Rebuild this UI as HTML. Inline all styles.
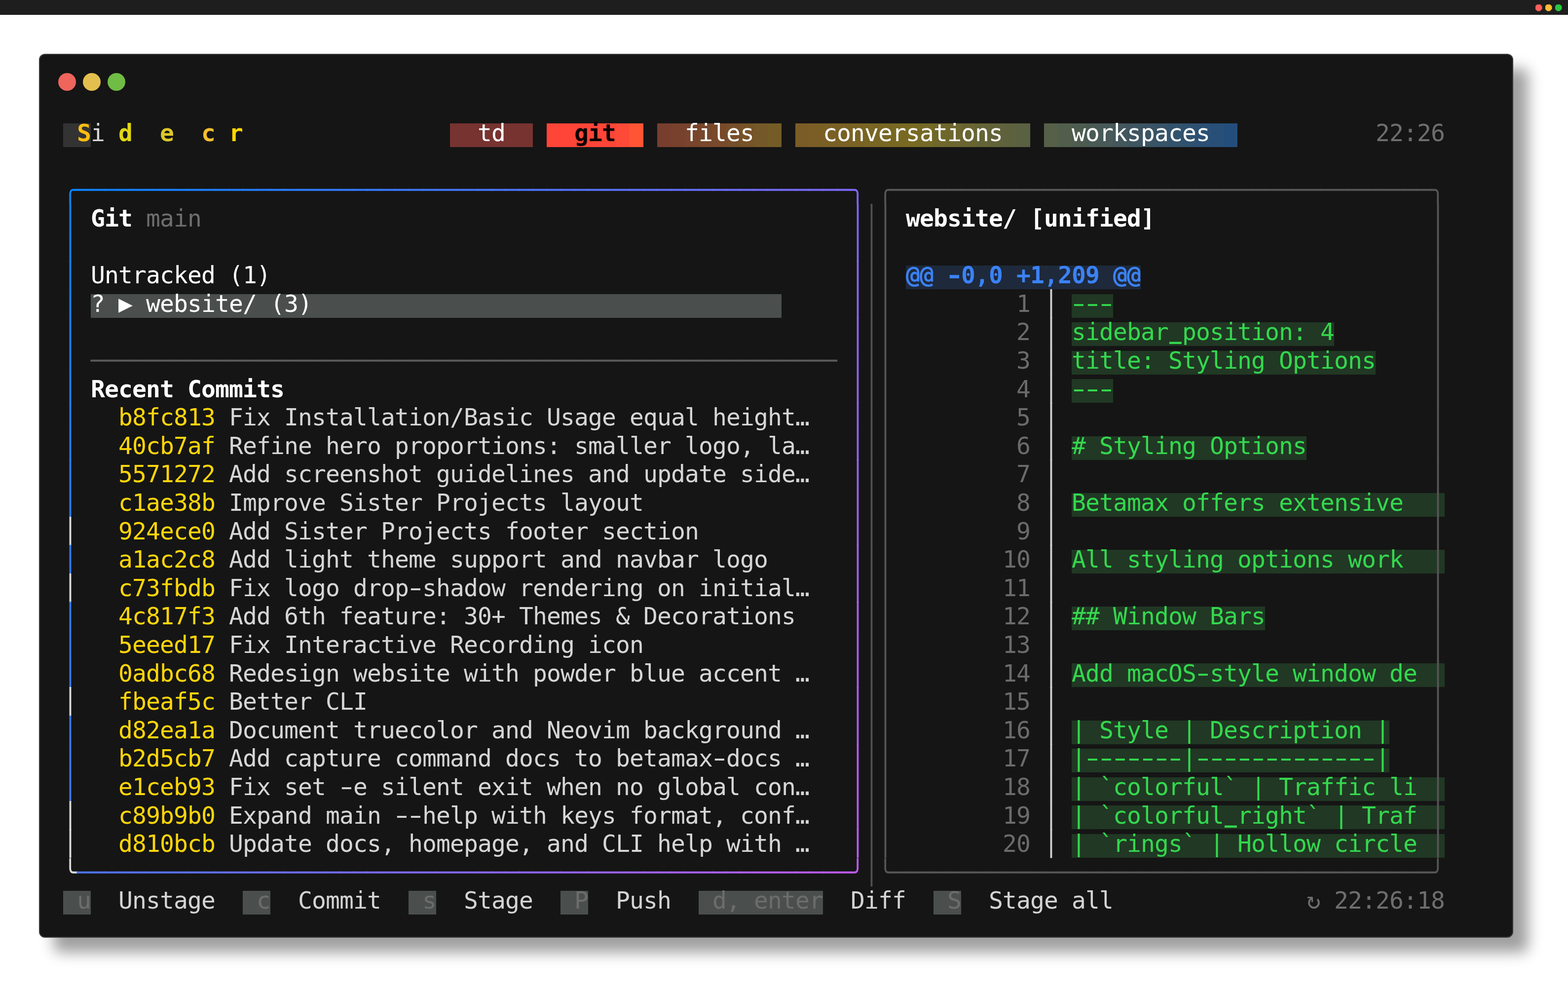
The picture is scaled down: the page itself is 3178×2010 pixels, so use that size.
<!DOCTYPE html>
<html lang="en"><head><meta charset="utf-8"><title>Sidecar - git</title>
<style>
html,body{margin:0;padding:0;background:#fff}
body{width:3178px;height:2010px;position:relative;overflow:hidden;font-family:"DejaVu Sans Mono","Liberation Mono",monospace}
#bar{position:absolute;left:0;top:0;width:3178px;height:29px;background:#1e1e1e;border-bottom:1px solid #0c0c0c}
#bar b{position:absolute;top:8.5px;width:14px;height:14px;clip-path:polygon(31% 0,69% 0,100% 31%,100% 69%,69% 100%,31% 100%,0 69%,0 31%)}
#win{position:absolute;left:79px;top:109px;width:2988px;height:1791px;background:#151515;border:2px solid #3a3a3a;border-radius:12px;box-shadow:30px 30px 29px rgba(0,0,0,.375);box-sizing:border-box}
#win .dot{position:absolute;top:37px;width:36px;height:36px;border-radius:50%}
#t{position:absolute;left:47px;top:-2px;width:2800px;height:1px;font-size:48px;line-height:57.6px;letter-spacing:calc(28px - 1ch);white-space:pre;color:#d6d6d6;will-change:transform}
.r{position:absolute;left:0;width:2800px;height:57.6px}
.r span{position:relative}
.r .h,.r .u,.r .v{display:inline-block}
.r i{position:absolute;top:8.8px;height:48px;display:block}
.b{font-weight:bold}
.r .h{transform:translateY(-1px) scaleX(1.565);transform-origin:14.45px 50%}
.r .u{transform:translateY(-4.3px) scale(.86,2.35);transform-origin:14.45px 56.2px}
.r .h.b{transform:scaleX(1.305)}
.r .v{transform:scaleY(1.026);transform-origin:50% 51%}
</style></head>
<body>
<div id="bar"><b style="left:3111.5px;background:#ff5f58"></b><b style="left:3131.5px;background:#febc2e"></b><b style="left:3151.5px;background:#28c840"></b></div>
<div id="win">
<div class="dot" style="left:37px;background:#ee655c"></div><div class="dot" style="left:87px;background:#e3c04e"></div><div class="dot" style="left:137px;background:#6fbd45"></div>
<div id="t">
<div class="r" style="top:132.2px"><i style="left:0px;width:56px;background:#333333"></i><i style="left:784px;width:168px;background:linear-gradient(90deg,#773330 0px,#773330 28px,#773330 28px,#773330 56px,#773330 56px,#773330 84px,#773330 84px,#773330 112px,#773330 112px,#773330 140px,#773330 140px,#773330 168px)"></i><i style="left:980px;width:196px;background:linear-gradient(90deg,#ff4538 0px,#ff4538 28px,#ff4538 28px,#ff4538 56px,#ff4538 56px,#ff4538 84px,#ff4538 84px,#ff4538 112px,#ff4538 112px,#ff4538 140px,#ff4a38 140px,#ff4a38 168px,#ff5535 168px,#ff5535 196px)"></i><i style="left:1204px;width:252px;background:linear-gradient(90deg,#773e2e 0px,#773e2e 28px,#77412d 28px,#77412d 56px,#78442c 56px,#78442c 84px,#78472c 84px,#78472c 112px,#784a2b 112px,#784a2b 140px,#774e2a 140px,#774e2a 168px,#765328 168px,#765328 196px,#745827 196px,#745827 224px,#735c26 224px,#735c26 252px)"></i><i style="left:1484px;width:476px;background:linear-gradient(90deg,#7a5c26 0px,#7a5c26 28px,#7a5e26 28px,#7a5e26 56px,#7a6025 56px,#7a6025 84px,#796124 84px,#796124 112px,#796324 112px,#796324 140px,#796524 140px,#796524 168px,#786623 168px,#786623 196px,#786822 196px,#786822 224px,#786a22 224px,#786a22 252px,#746926 252px,#746926 280px,#70682a 280px,#70682a 308px,#6d662e 308px,#6d662e 336px,#696532 336px,#696532 364px,#656436 364px,#656436 392px,#62623a 392px,#62623a 420px,#5e613e 420px,#5e613e 448px,#5a6042 448px,#5a6042 476px)"></i><i style="left:1988px;width:392px;background:linear-gradient(90deg,#566048 0px,#566048 28px,#525e4c 28px,#525e4c 56px,#4e5c50 56px,#4e5c50 84px,#4a5a54 84px,#4a5a54 112px,#475958 112px,#475958 140px,#43575c 140px,#43575c 168px,#3f5560 168px,#3f5560 196px,#3b5464 196px,#3b5464 224px,#375368 224px,#375368 252px,#33526c 252px,#33526c 280px,#2f5170 280px,#2f5170 308px,#2b5074 308px,#2b5074 336px,#274f78 336px,#274f78 364px,#234e7c 364px,#234e7c 392px)"></i> <span class="b" style="color:#ffbe0f">S</span><span style="color:#d7d7d7">i</span> <span class="b" style="color:#e1d714">d</span>  <span class="b" style="color:#dcc828">e</span>  <span class="b" style="color:#f5be2d">c</span> <span class="b" style="color:#ffd700">r</span>                 <span style="color:#ffffff">td</span>     <span class="b" style="color:#0a0000">git</span>     <span style="color:#ffffff">files</span>     <span style="color:#ffffff">conversations</span>     <span style="color:#ffffff">workspaces</span>            <span style="color:#6e6e6e">22:26</span></div>
<div class="r" style="top:247.4px"><span style="color:#0a84ff">╭</span><span style="color:#0c84ff">─</span><span style="color:#0e83ff">─</span><span style="color:#1083ff">─</span><span style="color:#1282fe">─</span><span style="color:#1482fe">─</span><span style="color:#1681fe">─</span><span style="color:#1881fe">─</span><span style="color:#1a80fe">─</span><span style="color:#1c80fe">─</span><span style="color:#1e7ffe">─</span><span style="color:#207ffd">─</span><span style="color:#227efd">─</span><span style="color:#247efd">─</span><span style="color:#267dfd">─</span><span style="color:#287dfd">─</span><span style="color:#2b7cfd">─</span><span style="color:#2d7cfd">─</span><span style="color:#2f7cfc">─</span><span style="color:#317bfc">─</span><span style="color:#337bfc">─</span><span style="color:#357afc">─</span><span style="color:#377afc">─</span><span style="color:#3979fc">─</span><span style="color:#3b79fb">─</span><span style="color:#3d78fb">─</span><span style="color:#3f78fb">─</span><span style="color:#4177fb">─</span><span style="color:#4377fb">─</span><span style="color:#4576fb">─</span><span style="color:#4776fb">─</span><span style="color:#4975fa">─</span><span style="color:#4b75fa">─</span><span style="color:#4d74fa">─</span><span style="color:#4f74fa">─</span><span style="color:#5173fa">─</span><span style="color:#5373fa">─</span><span style="color:#5573fa">─</span><span style="color:#5772f9">─</span><span style="color:#5972f9">─</span><span style="color:#5b71f9">─</span><span style="color:#5d71f9">─</span><span style="color:#5f70f9">─</span><span style="color:#6170f9">─</span><span style="color:#636ff9">─</span><span style="color:#656ff8">─</span><span style="color:#676ef8">─</span><span style="color:#6a6ef8">─</span><span style="color:#6c6df8">─</span><span style="color:#6e6df8">─</span><span style="color:#706cf8">─</span><span style="color:#726cf8">─</span><span style="color:#746bf7">─</span><span style="color:#766bf7">─</span><span style="color:#786bf7">─</span><span style="color:#7a6af7">─</span><span style="color:#7c6af7">─</span><span style="color:#7e69f7">╮</span> <span style="color:#565656">╭───────────────────────────────────────╮</span></div>
<div class="r" style="top:305.0px"><span class="v" style="color:#0d83ff">│</span> <span class="b" style="color:#ffffff">Git</span> <span style="color:#6e6e6e">main</span>                                               <span class="v" style="color:#8168f6">│</span><span class="v" style="color:#505050">│</span><span class="v" style="color:#565656">│</span> <span class="b" style="color:#ffffff">website/ [unified]</span>                    <span class="v" style="color:#565656">│</span></div>
<div class="r" style="top:362.6px"><span class="v" style="color:#0f83ff">│</span>                                                        <span class="v" style="color:#8368f6">│</span><span class="v" style="color:#505050">│</span><span class="v" style="color:#565656">│</span>                                       <span class="v" style="color:#565656">│</span></div>
<div class="r" style="top:420.2px"><i style="left:1708px;width:476px;background:#1e293b"></i><span class="v" style="color:#1282fe">│</span> <span style="color:#ffffff">Untracked (1)</span>                                          <span class="v" style="color:#8667f6">│</span><span class="v" style="color:#505050">│</span><span class="v" style="color:#565656">│</span> <span class="b" style="color:#3b82f6">@@</span> <span class="h b" style="color:#3b82f6">-</span><span class="b" style="color:#3b82f6">0,0 +1,209 @@</span>                     <span class="v" style="color:#565656">│</span></div>
<div class="r" style="top:477.8px"><i style="left:56px;width:1400px;background:#4a4f4e"></i><i style="left:2044px;width:84px;background:#213824"></i><span class="v" style="color:#1581fe">│</span> <span style="color:#ffffff">? ▶ website/ (3)</span>                                       <span class="v" style="color:#8967f6">│</span><span class="v" style="color:#505050">│</span><span class="v" style="color:#565656">│</span>         <span style="color:#6b6b6b">1</span> <span class="v" style="color:#d0d0d0">│</span> <span class="h" style="color:#34d84e">-</span><span class="h" style="color:#34d84e">-</span><span class="h" style="color:#34d84e">-</span>                       <span class="v" style="color:#565656">│</span></div>
<div class="r" style="top:535.4px"><i style="left:2044px;width:532px;background:#213824"></i><span class="v" style="color:#1881fe">│</span>                                                        <span class="v" style="color:#8b66f6">│</span><span class="v" style="color:#505050">│</span><span class="v" style="color:#565656">│</span>         <span style="color:#6b6b6b">2</span> <span class="v" style="color:#d0d0d0">│</span> <span style="color:#34d84e">sidebar</span><span class="u" style="color:#34d84e">_</span><span style="color:#34d84e">position: 4</span>       <span class="v" style="color:#565656">│</span></div>
<div class="r" style="top:593.0px"><i style="left:2044px;width:616px;background:#213824"></i><span class="v" style="color:#1a80fe">│</span> <span style="color:#5a5a5a">──────────────────────────────────────────────────────</span> <span class="v" style="color:#8e65f6">│</span><span class="v" style="color:#505050">│</span><span class="v" style="color:#565656">│</span>         <span style="color:#6b6b6b">3</span> <span class="v" style="color:#d0d0d0">│</span> <span style="color:#34d84e">title: Styling Options</span>    <span class="v" style="color:#565656">│</span></div>
<div class="r" style="top:650.6px"><i style="left:2044px;width:84px;background:#213824"></i><span class="v" style="color:#1d80fe">│</span> <span class="b" style="color:#ffffff">Recent Commits</span>                                         <span class="v" style="color:#9165f5">│</span><span class="v" style="color:#505050">│</span><span class="v" style="color:#565656">│</span>         <span style="color:#6b6b6b">4</span> <span class="v" style="color:#d0d0d0">│</span> <span class="h" style="color:#34d84e">-</span><span class="h" style="color:#34d84e">-</span><span class="h" style="color:#34d84e">-</span>                       <span class="v" style="color:#565656">│</span></div>
<div class="r" style="top:708.2px"><span class="v" style="color:#207ffd">│</span>   <span style="color:#ffd60a">b8fc813</span> <span style="color:#d6d6d6">Fix Installation/Basic Usage equal height…</span>   <span class="v" style="color:#9464f5">│</span><span class="v" style="color:#505050">│</span><span class="v" style="color:#565656">│</span>         <span style="color:#6b6b6b">5</span> <span class="v" style="color:#d0d0d0">│</span>                           <span class="v" style="color:#565656">│</span></div>
<div class="r" style="top:765.8px"><i style="left:2044px;width:476px;background:#213824"></i><span class="v" style="color:#227efd">│</span>   <span style="color:#ffd60a">40cb7af</span> <span style="color:#d6d6d6">Refine hero proportions: smaller logo, la…</span>   <span class="v" style="color:#9663f5">│</span><span class="v" style="color:#505050">│</span><span class="v" style="color:#565656">│</span>         <span style="color:#6b6b6b">6</span> <span class="v" style="color:#d0d0d0">│</span> <span style="color:#34d84e"># Styling Options</span>         <span class="v" style="color:#565656">│</span></div>
<div class="r" style="top:823.4px"><span class="v" style="color:#257efd">│</span>   <span style="color:#ffd60a">5571272</span> <span style="color:#d6d6d6">Add screenshot guidelines and update side…</span>   <span class="v" style="color:#9963f5">│</span><span class="v" style="color:#505050">│</span><span class="v" style="color:#565656">│</span>         <span style="color:#6b6b6b">7</span> <span class="v" style="color:#d0d0d0">│</span>                           <span class="v" style="color:#565656">│</span></div>
<div class="r" style="top:881.0px"><i style="left:2044px;width:756px;background:#213824"></i><span class="v" style="color:#287dfd">│</span>   <span style="color:#ffd60a">c1ae38b</span> <span style="color:#d6d6d6">Improve Sister Projects layout</span>               <span class="v" style="color:#9c62f5">│</span><span class="v" style="color:#505050">│</span><span class="v" style="color:#565656">│</span>         <span style="color:#6b6b6b">8</span> <span class="v" style="color:#d0d0d0">│</span> <span style="color:#34d84e">Betamax offers extensive</span>  <span class="v" style="color:#565656">│</span></div>
<div class="r" style="top:938.6px"><span class="v" style="color:#dadada">│</span>   <span style="color:#ffd60a">924ece0</span> <span style="color:#d6d6d6">Add Sister Projects footer section</span>           <span class="v" style="color:#9e62f4">│</span><span class="v" style="color:#505050">│</span><span class="v" style="color:#565656">│</span>         <span style="color:#6b6b6b">9</span> <span class="v" style="color:#d0d0d0">│</span>                           <span class="v" style="color:#565656">│</span></div>
<div class="r" style="top:996.2px"><i style="left:2044px;width:756px;background:#213824"></i><span class="v" style="color:#2d7cfc">│</span>   <span style="color:#ffd60a">a1ac2c8</span> <span style="color:#d6d6d6">Add light theme support and navbar logo</span>      <span class="v" style="color:#a161f4">│</span><span class="v" style="color:#505050">│</span><span class="v" style="color:#565656">│</span>        <span style="color:#6b6b6b">10</span> <span class="v" style="color:#d0d0d0">│</span> <span style="color:#34d84e">All styling options work</span>  <span class="v" style="color:#565656">│</span></div>
<div class="r" style="top:1053.8px"><span class="v" style="color:#dadada">│</span>   <span style="color:#ffd60a">c73fbdb</span> <span style="color:#d6d6d6">Fix logo drop</span><span class="h" style="color:#d6d6d6">-</span><span style="color:#d6d6d6">shadow rendering on initial…</span>   <span class="v" style="color:#a460f4">│</span><span class="v" style="color:#505050">│</span><span class="v" style="color:#565656">│</span>        <span style="color:#6b6b6b">11</span> <span class="v" style="color:#d0d0d0">│</span>                           <span class="v" style="color:#565656">│</span></div>
<div class="r" style="top:1111.4px"><i style="left:2044px;width:392px;background:#213824"></i><span class="v" style="color:#337bfc">│</span>   <span style="color:#ffd60a">4c817f3</span> <span style="color:#d6d6d6">Add 6th feature: 30+ Themes &amp; Decorations</span>    <span class="v" style="color:#a760f4">│</span><span class="v" style="color:#505050">│</span><span class="v" style="color:#565656">│</span>        <span style="color:#6b6b6b">12</span> <span class="v" style="color:#d0d0d0">│</span> <span style="color:#34d84e">## Window Bars</span>            <span class="v" style="color:#565656">│</span></div>
<div class="r" style="top:1169.0px"><span class="v" style="color:#357afc">│</span>   <span style="color:#ffd60a">5eeed17</span> <span style="color:#d6d6d6">Fix Interactive Recording icon</span>               <span class="v" style="color:#a95ff4">│</span><span class="v" style="color:#505050">│</span><span class="v" style="color:#565656">│</span>        <span style="color:#6b6b6b">13</span> <span class="v" style="color:#d0d0d0">│</span>                           <span class="v" style="color:#565656">│</span></div>
<div class="r" style="top:1226.6px"><i style="left:2044px;width:756px;background:#213824"></i><span class="v" style="color:#3879fc">│</span>   <span style="color:#ffd60a">0adbc68</span> <span style="color:#d6d6d6">Redesign website with powder blue accent …</span>   <span class="v" style="color:#ac5ef3">│</span><span class="v" style="color:#505050">│</span><span class="v" style="color:#565656">│</span>        <span style="color:#6b6b6b">14</span> <span class="v" style="color:#d0d0d0">│</span> <span style="color:#34d84e">Add macOS</span><span class="h" style="color:#34d84e">-</span><span style="color:#34d84e">style window de</span> <span class="v" style="color:#565656">│</span></div>
<div class="r" style="top:1284.2px"><span class="v" style="color:#dadada">│</span>   <span style="color:#ffd60a">fbeaf5c</span> <span style="color:#d6d6d6">Better CLI</span>                                   <span class="v" style="color:#af5ef3">│</span><span class="v" style="color:#505050">│</span><span class="v" style="color:#565656">│</span>        <span style="color:#6b6b6b">15</span> <span class="v" style="color:#d0d0d0">│</span>                           <span class="v" style="color:#565656">│</span></div>
<div class="r" style="top:1341.8px"><i style="left:2044px;width:644px;background:#213824"></i><span class="v" style="color:#3e78fb">│</span>   <span style="color:#ffd60a">d82ea1a</span> <span style="color:#d6d6d6">Document truecolor and Neovim background …</span>   <span class="v" style="color:#b15df3">│</span><span class="v" style="color:#505050">│</span><span class="v" style="color:#565656">│</span>        <span style="color:#6b6b6b">16</span> <span class="v" style="color:#d0d0d0">│</span> <span style="color:#34d84e">| Style | Description |</span>   <span class="v" style="color:#565656">│</span></div>
<div class="r" style="top:1399.4px"><i style="left:2044px;width:644px;background:#213824"></i><span class="v" style="color:#4077fb">│</span>   <span style="color:#ffd60a">b2d5cb7</span> <span style="color:#d6d6d6">Add capture command docs to betamax</span><span class="h" style="color:#d6d6d6">-</span><span style="color:#d6d6d6">docs …</span>   <span class="v" style="color:#b45df3">│</span><span class="v" style="color:#505050">│</span><span class="v" style="color:#565656">│</span>        <span style="color:#6b6b6b">17</span> <span class="v" style="color:#d0d0d0">│</span> <span style="color:#34d84e">|</span><span class="h" style="color:#34d84e">-</span><span class="h" style="color:#34d84e">-</span><span class="h" style="color:#34d84e">-</span><span class="h" style="color:#34d84e">-</span><span class="h" style="color:#34d84e">-</span><span class="h" style="color:#34d84e">-</span><span class="h" style="color:#34d84e">-</span><span style="color:#34d84e">|</span><span class="h" style="color:#34d84e">-</span><span class="h" style="color:#34d84e">-</span><span class="h" style="color:#34d84e">-</span><span class="h" style="color:#34d84e">-</span><span class="h" style="color:#34d84e">-</span><span class="h" style="color:#34d84e">-</span><span class="h" style="color:#34d84e">-</span><span class="h" style="color:#34d84e">-</span><span class="h" style="color:#34d84e">-</span><span class="h" style="color:#34d84e">-</span><span class="h" style="color:#34d84e">-</span><span class="h" style="color:#34d84e">-</span><span class="h" style="color:#34d84e">-</span><span style="color:#34d84e">|</span>   <span class="v" style="color:#565656">│</span></div>
<div class="r" style="top:1457.0px"><i style="left:2044px;width:756px;background:#213824"></i><span class="v" style="color:#4377fb">│</span>   <span style="color:#ffd60a">e1ceb93</span> <span style="color:#d6d6d6">Fix set</span> <span class="h" style="color:#d6d6d6">-</span><span style="color:#d6d6d6">e silent exit when no global con…</span>   <span class="v" style="color:#b75cf3">│</span><span class="v" style="color:#505050">│</span><span class="v" style="color:#565656">│</span>        <span style="color:#6b6b6b">18</span> <span class="v" style="color:#d0d0d0">│</span> <span style="color:#34d84e">| `colorful` | Traffic li</span> <span class="v" style="color:#565656">│</span></div>
<div class="r" style="top:1514.6px"><i style="left:2044px;width:756px;background:#213824"></i><span class="v" style="color:#dadada">│</span>   <span style="color:#ffd60a">c89b9b0</span> <span style="color:#d6d6d6">Expand main</span> <span class="h" style="color:#d6d6d6">-</span><span class="h" style="color:#d6d6d6">-</span><span style="color:#d6d6d6">help with keys format, conf…</span>   <span class="v" style="color:#ba5bf2">│</span><span class="v" style="color:#505050">│</span><span class="v" style="color:#565656">│</span>        <span style="color:#6b6b6b">19</span> <span class="v" style="color:#d0d0d0">│</span> <span style="color:#34d84e">| `colorful</span><span class="u" style="color:#34d84e">_</span><span style="color:#34d84e">right` | Traf</span> <span class="v" style="color:#565656">│</span></div>
<div class="r" style="top:1572.2px"><i style="left:2044px;width:756px;background:#213824"></i><span class="v" style="color:#dadada">│</span>   <span style="color:#ffd60a">d810bcb</span> <span style="color:#d6d6d6">Update docs, homepage, and CLI help with …</span>   <span class="v" style="color:#bc5bf2">│</span><span class="v" style="color:#505050">│</span><span class="v" style="color:#565656">│</span>        <span style="color:#6b6b6b">20</span> <span class="v" style="color:#d0d0d0">│</span> <span style="color:#34d84e">| `rings` | Hollow circle</span> <span class="v" style="color:#565656">│</span></div>
<div class="r" style="top:1629.8px"><span style="color:#dadada">╰</span><span style="color:#4d74fa">─</span><span style="color:#4f74fa">─</span><span style="color:#5173fa">─</span><span style="color:#5373fa">─</span><span style="color:#5573fa">─</span><span style="color:#5772f9">─</span><span style="color:#5972f9">─</span><span style="color:#5b71f9">─</span><span style="color:#5d71f9">─</span><span style="color:#5f70f9">─</span><span style="color:#6270f9">─</span><span style="color:#646ff9">─</span><span style="color:#666ff8">─</span><span style="color:#686ef8">─</span><span style="color:#6a6ef8">─</span><span style="color:#6c6df8">─</span><span style="color:#6e6df8">─</span><span style="color:#706cf8">─</span><span style="color:#726cf8">─</span><span style="color:#746bf7">─</span><span style="color:#766bf7">─</span><span style="color:#786bf7">─</span><span style="color:#7a6af7">─</span><span style="color:#7c6af7">─</span><span style="color:#7e69f7">─</span><span style="color:#8069f7">─</span><span style="color:#8268f6">─</span><span style="color:#8468f6">─</span><span style="color:#8667f6">─</span><span style="color:#8867f6">─</span><span style="color:#8a66f6">─</span><span style="color:#8c66f6">─</span><span style="color:#8e65f6">─</span><span style="color:#9065f5">─</span><span style="color:#9264f5">─</span><span style="color:#9464f5">─</span><span style="color:#9663f5">─</span><span style="color:#9863f5">─</span><span style="color:#9a62f5">─</span><span style="color:#9c62f4">─</span><span style="color:#9e62f4">─</span><span style="color:#a161f4">─</span><span style="color:#a361f4">─</span><span style="color:#a560f4">─</span><span style="color:#a760f4">─</span><span style="color:#a95ff4">─</span><span style="color:#ab5ff3">─</span><span style="color:#ad5ef3">─</span><span style="color:#af5ef3">─</span><span style="color:#b15df3">─</span><span style="color:#b35df3">─</span><span style="color:#b55cf3">─</span><span style="color:#b75cf3">─</span><span style="color:#b95bf2">─</span><span style="color:#bb5bf2">─</span><span style="color:#bd5af2">─</span><span style="color:#bf5af2">╯</span><span class="v" style="color:#505050">│</span><span style="color:#565656">╰───────────────────────────────────────╯</span></div>
<div class="r" style="top:1687.4px"><i style="left:0px;width:56px;background:#4a4f4e"></i><i style="left:364px;width:56px;background:#4a4f4e"></i><i style="left:700px;width:56px;background:#4a4f4e"></i><i style="left:1008px;width:56px;background:#4a4f4e"></i><i style="left:1288px;width:252px;background:#4a4f4e"></i><i style="left:1764px;width:56px;background:#4a4f4e"></i> <span style="color:#6c6c6c">u</span>  <span style="color:#d4d4d4">Unstage</span>   <span style="color:#6c6c6c">c</span>  <span style="color:#d4d4d4">Commit</span>   <span style="color:#6c6c6c">s</span>  <span style="color:#d4d4d4">Stage</span>   <span style="color:#6c6c6c">P</span>  <span style="color:#d4d4d4">Push</span>   <span style="color:#6c6c6c">d, enter</span>  <span style="color:#d4d4d4">Diff</span>   <span style="color:#6c6c6c">S</span>  <span style="color:#d4d4d4">Stage all</span>              <span style="color:#6e6e6e">↻ 22:26:18</span></div>
</div>
</div>
</body></html>
